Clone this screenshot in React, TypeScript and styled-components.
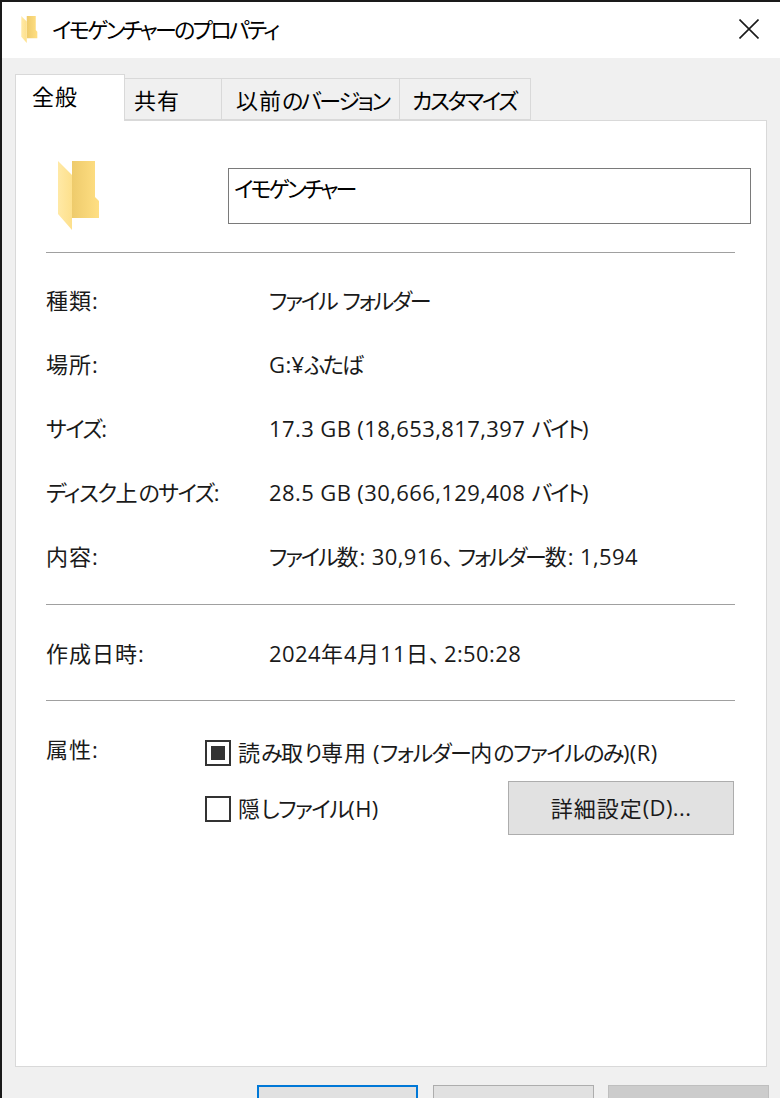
import React from 'react';
import styled, {createGlobalStyle} from "styled-components";

const GlobalStyle = createGlobalStyle`
  html, body {
    margin: 0;
    padding: 0;
    height: 1098px;
    overflow: hidden;
    background: #f0f0f0;
  }
  body {
    font-family: "Open Sans", "Noto Sans CJK JP", sans-serif;
    font-feature-settings: "palt" 1;
    font-size: 22px;
    letter-spacing: 0.4px;
    color: #1a1a1a;
  }
`

const Kana = styled.span`
  letter-spacing: -1.5px;
`

const Kanji = styled.span`
  letter-spacing: 1px;
`

const Comma = styled.span`
  letter-spacing: 4px;
`

// the original font has narrow kana and wide kanji, so each run gets its own tracking
const Jp = ({text}: {text: string}) => (
    <>
        {text.split(/(、|[\u3040-\u30ff]+|[\u4e00-\u9fff]+)/).map((part, i) => {
            if (part === '、') return <Comma key={i}>{part}</Comma>;
            if (/[\u3040-\u30ff]/.test(part)) return <Kana key={i}>{part}</Kana>;
            if (/[\u4e00-\u9fff]/.test(part)) return <Kanji key={i}>{part}</Kanji>;
            return part;
        })}
    </>
);

const FolderIcon = ({size}: {size: 'small' | 'big'}) => {
    const id = 'folder-' + size;
    return (
        <FolderSvg $size={size} viewBox="0 0 42 69">
            <defs>
                <linearGradient id={id} gradientUnits="userSpaceOnUse" x1="14" y1="0" x2="41" y2="0">
                    <stop offset="0" stopColor="#eecb6c"/>
                    <stop offset="1" stopColor="#ffdf83"/>
                </linearGradient>
                <linearGradient id={id + '-flap'} gradientUnits="userSpaceOnUse" x1="0" y1="0" x2="14" y2="0">
                    <stop offset="0" stopColor="#ffe9a6"/>
                    <stop offset="1" stopColor="#fde08c"/>
                </linearGradient>
            </defs>
            <path d="M1 0H37V36L41 40V57H14V0Z" fill={`url(#${id})`}/>
            <path d="M0 0L14 14V69L0 53Z" fill={`url(#${id}-flap)`}/>
        </FolderSvg>
    );
};

const tabs = [
    {label: '全般', width: 110, pad: 16, active: true},
    {label: '共有', width: 98, pad: 9},
    {label: '以前のバージョン', width: 179, pad: 14},
    {label: 'カスタマイズ', width: 132, pad: 12},
];

const infoRows = [
    {label: '種類:', value: 'ファイル フォルダー'},
    {label: '場所:', value: 'G:¥ふたば'},
    {label: 'サイズ:', value: '17.3 GB (18,653,817,397 バイト)'},
    {label: 'ディスク上のサイズ:', value: '28.5 GB (30,666,129,408 バイト)'},
    {label: '内容:', value: 'ファイル数: 30,916、フォルダー数: 1,594'},
];

export default function App() {
    return (
        <Window>
            <GlobalStyle/>
            <TitleBar>
                <FolderIcon size="small"/>
                <TitleText><Jp text="イモゲンチャーのプロパティ"/></TitleText>
                <CloseIcon viewBox="0 0 20 20">
                    <path d="M0.5 0.5L19.5 19.5M19.5 0.5L0.5 19.5" stroke="#1a1a1a" strokeWidth="1.6" fill="none"/>
                </CloseIcon>
            </TitleBar>
            <Body>
                <TabRow>
                    {tabs.map(t => (
                        <Tab key={t.label} $active={t.active} $width={t.width} $pad={t.pad}><Jp text={t.label}/></Tab>
                    ))}
                </TabRow>
                <Panel>
                    <NameRow>
                        <FolderBox><FolderIcon size="big"/></FolderBox>
                        <NameBox><Jp text="イモゲンチャー"/></NameBox>
                    </NameRow>
                    <Divider/>
                    <InfoGroup>
                        {infoRows.map(r => (
                            <InfoRow key={r.label}>
                                <span><Jp text={r.label}/></span>
                                <InfoValue><Jp text={r.value}/></InfoValue>
                            </InfoRow>
                        ))}
                    </InfoGroup>
                    <Divider/>
                    <DateRow>
                        <span><Jp text="作成日時:"/></span>
                        <InfoValue><Jp text="2024年4月11日、2:50:28"/></InfoValue>
                    </DateRow>
                    <Divider/>
                    <AttrSection>
                        <AttrLabel><Jp text="属性:"/></AttrLabel>
                        <AttrBody>
                            <CheckRow>
                                <CheckBox $mixed/>
                                <CheckText><Jp text="読み取り専用 (フォルダー内のファイルのみ)(R)"/></CheckText>
                            </CheckRow>
                            <SecondRow>
                                <CheckRow>
                                    <CheckBox/>
                                    <CheckText><Jp text="隠しファイル(H)"/></CheckText>
                                </CheckRow>
                                <DetailButton><Jp text="詳細設定(D)..."/></DetailButton>
                            </SecondRow>
                        </AttrBody>
                    </AttrSection>
                </Panel>
                <Footer>
                    <FooterButton $kind="primary"/>
                    <FooterButton $kind="normal"/>
                    <FooterButton $kind="disabled"/>
                </Footer>
            </Body>
        </Window>
    );
}

const Window = styled.div`
  width: 780px;
  height: 1098px;
  box-sizing: border-box;
  border-top: 2px solid #1a1a1a;
  border-left: 2px solid #1a1a1a;
  overflow: hidden;
  display: flex;
  flex-direction: column;
`

const TitleBar = styled.div`
  height: 56px;
  flex: none;
  background: #fff;
  display: flex;
  align-items: center;
  padding: 0 21px 0 18px;
`

const TitleText = styled.div`
  margin: -4px 0 0 13px;
  flex: 1;
  color: #000;
  ${Kana} {
    letter-spacing: -2.65px;
  }
`

const CloseIcon = styled.svg`
  width: 20px;
  height: 20px;
  margin-top: -2px;
`

const FolderSvg = styled.svg<{$size: 'small' | 'big'}>`
  display: block;
  flex: none;
  width: ${p => p.$size === 'small' ? '19px' : '42px'};
  height: ${p => p.$size === 'small' ? '27px' : '69px'};
  margin-top: ${p => p.$size === 'small' ? '-2px' : '0'};
`

const Body = styled.div`
  flex: 1;
  background: #f0f0f0;
  padding: 16px 11px 0 13px;
`

const TabRow = styled.div`
  display: flex;
  align-items: flex-end;
  height: 47px;
  margin-bottom: -1px;
  position: relative;
  z-index: 1;
`

const Tab = styled.div<{$active?: boolean; $width: number; $pad: number}>`
  box-sizing: border-box;
  width: ${p => p.$width}px;
  height: ${p => p.$active ? '47px' : '42px'};
  margin-bottom: ${p => p.$active ? '0' : '1px'};
  margin-left: ${p => p.$active ? '0' : '-1px'};
  background: ${p => p.$active ? '#fff' : '#f0f0f0'};
  border: 1px solid #d9d9d9;
  border-bottom: ${p => p.$active ? 'none' : '1px solid #d9d9d9'};
  padding: ${p => p.$active ? '2px' : '2px'} 0 0 ${p => p.$pad}px;
  line-height: 38px;
  white-space: nowrap;
  color: #000;
  ${Kana} {
    letter-spacing: -2.3px;
  }
`

const Panel = styled.div`
  box-sizing: border-box;
  width: 752px;
  height: 947px;
  background: #fff;
  border: 1px solid #d9d9d9;
  padding: 47px 15px 0 30px;
`

const NameRow = styled.div`
  display: flex;
  align-items: flex-start;
  height: 84px;
`

const FolderBox = styled.div`
  box-sizing: border-box;
  width: 182px;
  flex: none;
  padding: 0 0 0 12px;
  margin-top: -7px;
`

const NameBox = styled.div`
  box-sizing: border-box;
  width: 523px;
  height: 56px;
  border: 1px solid #7a7a7a;
  padding: 1px 5px;
  line-height: 36px;
  color: #000;
  ${Kana} {
    letter-spacing: -2.9px;
  }
`

const Divider = styled.div`
  width: 689px;
  height: 1px;
  background: #a0a0a0;
`

const InfoGroup = styled.div`
  padding: 14px 0 17px;
`

const InfoRow = styled.div`
  display: grid;
  grid-template-columns: 223px 1fr;
  align-items: center;
  height: 64px;
  white-space: nowrap;
`

const InfoValue = styled.span`
  ${Kana} {
    letter-spacing: -2.2px;
  }
`

const DateRow = styled(InfoRow)`
  box-sizing: border-box;
  height: 95px;
  padding-bottom: 2px;
`

const AttrSection = styled.div`
  display: flex;
  align-items: flex-start;
  padding-top: 32px;
`

const AttrLabel = styled.div`
  width: 159px;
  flex: none;
  line-height: 32px;
`

const AttrBody = styled.div`
  flex: none;
  width: 530px;
`

const CheckRow = styled.div`
  display: flex;
  align-items: center;
  gap: 7px;
  height: 40px;
  white-space: nowrap;
`

const CheckText = styled.span`
  margin-top: -4px;
`

const CheckBox = styled.div<{$mixed?: boolean}>`
  box-sizing: border-box;
  width: 26px;
  height: 26px;
  flex: none;
  border: 2px solid #333;
  background: #fff;
  display: flex;
  align-items: center;
  justify-content: center;
  &::after {
    content: '';
    display: ${p => p.$mixed ? 'block' : 'none'};
    width: 14px;
    height: 14px;
    background: #333;
  }
`

const SecondRow = styled.div`
  display: flex;
  justify-content: space-between;
  align-items: flex-start;
  margin-top: 16px;
`

const DetailButton = styled.div`
  box-sizing: border-box;
  width: 226px;
  height: 54px;
  margin-top: -8px;
  margin-right: 1px;
  padding-bottom: 2px;
  background: #e1e1e1;
  border: 1px solid #adadad;
  display: flex;
  align-items: center;
  justify-content: center;
  white-space: pre;
`

const Footer = styled.div`
  display: flex;
  justify-content: flex-end;
  gap: 14px;
  margin-top: 18px;
  width: 754px;
`

const FooterButton = styled.div<{$kind: 'primary' | 'normal' | 'disabled'}>`
  box-sizing: border-box;
  width: 161px;
  height: 54px;
  margin-right: ${p => p.$kind === 'primary' ? '1px' : '0'};
  background: ${p => p.$kind === 'disabled' ? '#ccc' : '#e1e1e1'};
  border: ${p => p.$kind === 'primary' ? '2px solid #0078d7' : p.$kind === 'normal' ? '1px solid #adadad' : '1px solid #bfbfbf'};
`
